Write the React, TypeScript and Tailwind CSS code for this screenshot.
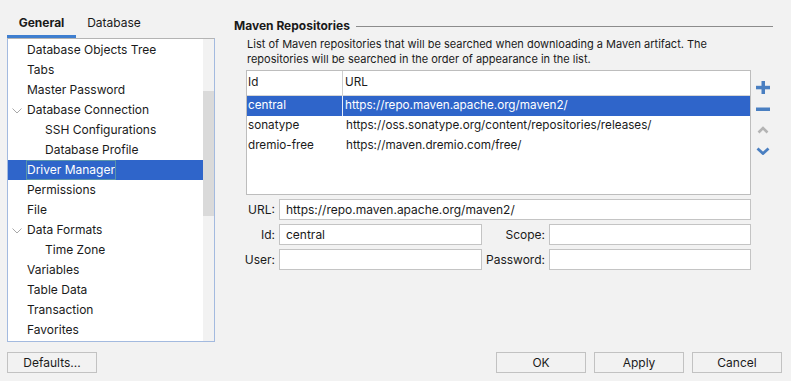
import React from 'react';

type TreeItem = { label: string; level: 1 | 2; expanded?: boolean; selected?: boolean };

const treeItems: TreeItem[] = [
  { label: 'Database Objects Tree', level: 1 },
  { label: 'Tabs', level: 1 },
  { label: 'Master Password', level: 1 },
  { label: 'Database Connection', level: 1, expanded: true },
  { label: 'SSH Configurations', level: 2 },
  { label: 'Database Profile', level: 2 },
  { label: 'Driver Manager', level: 1, selected: true },
  { label: 'Permissions', level: 1 },
  { label: 'File', level: 1 },
  { label: 'Data Formats', level: 1, expanded: true },
  { label: 'Time Zone', level: 2 },
  { label: 'Variables', level: 1 },
  { label: 'Table Data', level: 1 },
  { label: 'Transaction', level: 1 },
  { label: 'Favorites', level: 1 },
];

const repos = [
  { id: 'central', url: 'https://repo.maven.apache.org/maven2/', selected: true },
  { id: 'sonatype', url: 'https://oss.sonatype.org/content/repositories/releases/' },
  { id: 'dremio-free', url: 'https://maven.dremio.com/free/' },
];

const Chevron = () => (
  <svg width="10" height="6" viewBox="0 0 10 6" className="absolute left-[4px] top-[8px]">
    <polyline points="0.5,0.5 5,5 9.5,0.5" fill="none" stroke="#a8a8a8" strokeWidth="1" />
  </svg>
);

const Field: React.FC<{ value?: string; className?: string }> = ({ value = '', className = '' }) => (
  <div className={`h-[21px] bg-white border border-[#c4c4c4] pl-[6px] flex items-center ${className}`}>
    {value}
  </div>
);

const Button: React.FC<{ label: string }> = ({ label }) => (
  <button className="w-[90px] h-[21px] border border-[#c2c2c2] bg-[#f2f2f2] text-[12px] text-[#1a1a1a] leading-none">
    {label}
  </button>
);

export default function App() {
  return (
    <div className="w-[791px] h-[381px] bg-[#f2f2f2] text-[#1a1a1a] text-[12px] font-[Inter,'Noto_Sans',sans-serif] flex flex-col overflow-hidden">
      <div className="flex h-[342px]">
        {/* left column */}
        <div className="ml-[7px] w-[208px] flex flex-col">
          <div className="h-[38px] flex items-end">
            <div className="w-[69px] h-[38px] flex items-center justify-center font-bold border-b-[3px] border-[#3f7fd0] pt-[10px]">
              General
            </div>
            <div className="w-[76px] h-[38px] flex items-center justify-center pb-[3px] pt-[10px]">Database</div>
          </div>
          <div className="h-[304px] border border-[#a3badf] border-t-[#b4b4b4] bg-white flex">
            <div className="flex-1 pt-px">
              {treeItems.map((item) => (
                <div
                  key={item.label}
                  className={`relative h-[20px] flex items-center whitespace-nowrap ${
                    item.level === 1 ? 'pl-[19px]' : 'pl-[37px]'
                  } ${item.selected ? 'bg-[#2f65ca] text-white' : ''}`}
                >
                  {item.expanded && <Chevron />}
                  <span className={item.selected ? 'outline outline-1 outline-[#5a94ab]' : ''}>
                    {item.label}
                  </span>
                </div>
              ))}
            </div>
            <div className="w-[11px] bg-[#f2f2f2] pt-[52px]">
              <div className="h-[125px] bg-[#dadada]" />
            </div>
          </div>
        </div>

        {/* right column */}
        <div className="ml-[19px] w-[539px] flex flex-col pt-[18px]">
          <div className="h-[16px] flex items-center">
            <span className="font-bold">Maven Repositories</span>
            <div className="flex-1 h-px bg-[#8c8c8c] ml-[6px]" />
          </div>
          <div className="pl-[13px] mt-[3px] text-[11px] leading-[15px]">
            List of Maven repositories that will be searched when downloading a Maven artifact. The
            <br />
            repositories will be searched in the order of appearance in the list.
          </div>
          <div className="pl-[12px] mt-[3px] flex">
            <div className="w-[505px] h-[125px] border border-[#bdbdbd] bg-white text-[11.7px]">
              <div className="h-[25px] flex border-b border-[#d6d6d6]">
                <div className="w-[96px] border-r border-[#cfcfcf] pl-[1px] flex items-center">Id</div>
                <div className="pl-[2px] flex items-center">URL</div>
              </div>
              {repos.map((r) => (
                <div key={r.id} className={`h-[20px] flex ${r.selected ? 'bg-[#2f65ca] text-white' : ''}`}>
                  <div className={`w-[96px] pl-[1px] flex items-center ${r.selected ? 'border-r border-[#e8eefa]' : ''}`}>
                    {r.id}
                  </div>
                  <div className={`pl-[2px] flex items-center ${r.selected ? '' : 'ml-px'}`}>{r.url}</div>
                </div>
              ))}
            </div>
            <div className="ml-[4px] w-[15px] flex flex-col pt-[7px]">
              <div className="h-[21px] flex items-center justify-center">
                <svg width="14" height="14" viewBox="0 0 14 14">
                  <rect x="5.5" y="0" width="3.5" height="13" fill="#4a7fc1" />
                  <rect x="0" y="4.8" width="14" height="3.5" fill="#4a7fc1" />
                </svg>
              </div>
              <div className="h-[21px] flex items-center justify-center">
                <svg width="14" height="14" viewBox="0 0 14 14">
                  <rect x="0" y="5.5" width="14" height="3.5" fill="#4a7fc1" />
                </svg>
              </div>
              <div className="h-[21px] flex items-center justify-center">
                <svg width="12" height="8" viewBox="0 0 12 8">
                  <polyline points="1.5,6.5 6,2 10.5,6.5" fill="none" stroke="#b4b4b4" strokeWidth="2.6" />
                </svg>
              </div>
              <div className="h-[21px] flex items-center justify-center">
                <svg width="14" height="8" viewBox="0 0 14 8">
                  <polyline points="1.5,1.5 7,6.5 12.5,1.5" fill="none" stroke="#4a7fc1" strokeWidth="2.8" />
                </svg>
              </div>
            </div>
          </div>
          <div className="pl-[12px] mt-[4px] w-[517px] grid grid-cols-[33px_203px_67px_202px] gap-y-[4px]">
            <div className="text-right pr-[4px] h-[21px] flex items-center justify-end">URL:</div>
            <Field value="https://repo.maven.apache.org/maven2/" className="col-span-3" />
            <div className="text-right pr-[4px] h-[21px] flex items-center justify-end">Id:</div>
            <Field value="central" />
            <div className="text-right pr-[4px] h-[21px] flex items-center justify-end">Scope:</div>
            <Field />
            <div className="h-[21px] flex items-center justify-end pr-[4px] -ml-[2px]">User:</div>
            <Field />
            <div className="text-right pr-[4px] h-[21px] flex items-center justify-end">Password:</div>
            <Field />
          </div>
        </div>
      </div>

      {/* bottom buttons */}
      <div className="mt-[10px] pl-[7px] pr-[9px] flex">
        <Button label="Defaults..." />
        <div className="flex-1" />
        <div className="flex gap-[8px]">
          <Button label="OK" />
          <Button label="Apply" />
          <Button label="Cancel" />
        </div>
      </div>
    </div>
  );
}
